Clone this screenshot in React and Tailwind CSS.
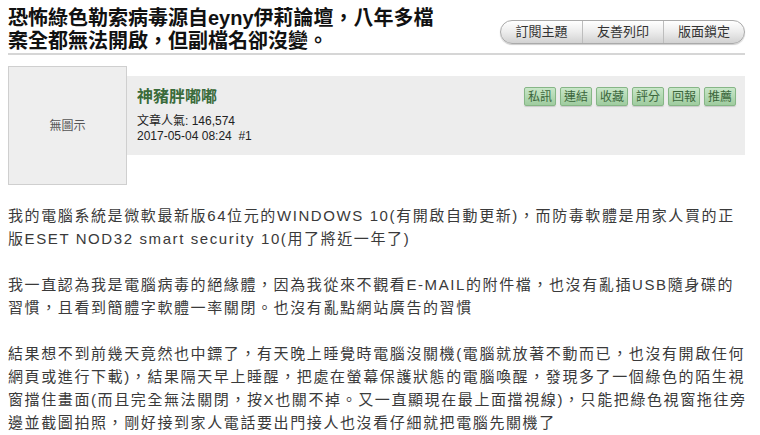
export default function App() {
    const actions = ['私訊', '連結', '收藏', '評分', '回報', '推薦'];
    const tools = ['訂閱主題', '友善列印', '版面鎖定'];

    return (
        <div className="w-[760px] h-[435px] overflow-hidden bg-white text-[#333] font-['Liberation_Sans','Noto_Sans_CJK_TC',sans-serif]">
            <div className="ml-2 w-[737px]">
                {/* title + tools */}
                <div className="flex justify-between items-start h-[55px] border-b-2 border-[#d6d6d6]">
                    <h1 className="pt-[7px] text-[20px] leading-[23px] font-bold text-[#111] whitespace-nowrap">
                        恐怖綠色勒索病毒源自eyny伊莉論壇，八年多檔
                        <br />
                        案全都無法開啟，但副檔名卻沒變。
                    </h1>
                    <div className="mt-[20px] flex h-[24px] rounded-full border border-[#aaaaaa] overflow-hidden bg-gradient-to-b from-[#ffffff] via-[#ececec] to-[#d2d2d2] shadow-[0_1px_1px_rgba(0,0,0,0.2)]">
                        {tools.map((t, i) => (
                            <div
                                key={t}
                                className={`w-[81px] flex items-center justify-center text-[13px] text-[#333] ${i > 0 ? 'border-l border-[#bdbdbd]' : ''}`}
                            >
                                {t}
                            </div>
                        ))}
                    </div>
                </div>

                {/* post header */}
                <div className="flex mt-[11px]">
                    <div className="w-[119px] h-[119px] shrink-0 bg-[#eeeeee] border border-[#cfcfcf] flex items-center justify-center text-[12px] text-[#555]">
                        無圖示
                    </div>
                    <div className="flex-1 mt-[10px] h-[79px] bg-[#ededed] flex justify-between pl-[10px] pr-[9px]">
                        <div className="pt-[11px]">
                            <div className="text-[16px] leading-[20px] font-bold text-[#3a6b3a]">神豬胖嘟嘟</div>
                            <div className="mt-[7px] text-[12px] leading-[15px] text-[#222]">
                                文章人氣: 146,574
                                <br />
                                2017-05-04 08:24&nbsp;&nbsp;#1
                            </div>
                        </div>
                        <div className="pt-[11px] flex gap-[4px] h-fit">
                            {actions.map((a) => (
                                <div
                                    key={a}
                                    className="w-[32px] h-[19px] flex items-center justify-center text-[12px] text-[#3b663b] rounded-[2px] border border-[#86b686] bg-gradient-to-b from-[#c8e6c8] to-[#9fcc9f] shadow-[0_1px_1px_rgba(0,0,0,0.15)]"
                                >
                                    {a}
                                </div>
                            ))}
                        </div>
                    </div>
                </div>

                {/* body */}
                <div className="mt-[19px] text-[15px] leading-[23px] tracking-[1.6px] whitespace-nowrap text-[#3a3a3a]">
                    <p>
                        我的電腦系統是微軟最新版64位元的WINDOWS 10(有開啟自動更新)，而防毒軟體是用家人買的正
                        <br />
                        版ESET NOD32 smart security 10(用了將近一年了)
                    </p>
                    <p className="mt-[23px]">
                        我一直認為我是電腦病毒的絕緣體，因為我從來不觀看E-MAIL的附件檔，也沒有亂插USB隨身碟的
                        <br />
                        習慣，且看到簡體字軟體一率關閉。也沒有亂點網站廣告的習慣
                    </p>
                    <p className="mt-[23px]">
                        結果想不到前幾天竟然也中鏢了，有天晚上睡覺時電腦沒關機(電腦就放著不動而已，也沒有開啟任何
                        <br />
                        網頁或進行下載)，結果隔天早上睡醒，把處在螢幕保護狀態的電腦喚醒，發現多了一個綠色的陌生視
                        <br />
                        窗擋住畫面(而且完全無法關閉，按X也關不掉。又一直顯現在最上面擋視線)，只能把綠色視窗拖往旁
                        <br />
                        邊並截圖拍照，剛好接到家人電話要出門接人也沒看仔細就把電腦先關機了
                    </p>
                </div>
            </div>
        </div>
    );
}
